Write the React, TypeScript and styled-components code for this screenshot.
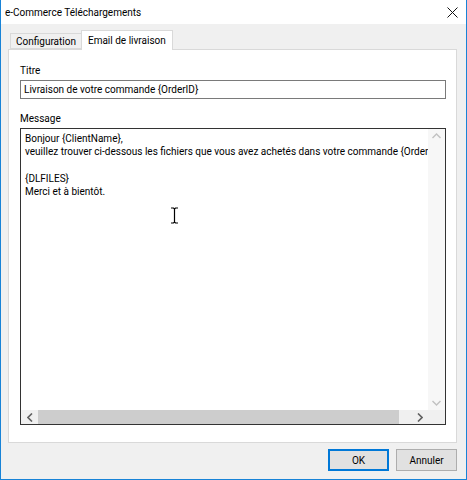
import React from 'react'
import styled, { createGlobalStyle } from 'styled-components'

const GlobalStyle = createGlobalStyle`
    html, body {
        margin: 0;
        padding: 0;
        background: #ffffff;
    }
    body {
        font-family: Roboto, 'Noto Sans', sans-serif;
        font-size: 10px;
        color: #000;
    }
`

const messageLines = [
    'Bonjour {ClientName},',
    'veuillez trouver ci-dessous les fichiers que vous avez achetés dans votre commande {OrderID}.',
    '',
    '{DLFILES}',
    'Merci et à bientôt.',
]

export default function App() {
    return (
        <>
            <GlobalStyle />
            <Window>
                <TitleBar>
                    <Title>e-Commerce Téléchargements</Title>
                    <CloseButton>
                        <svg width="11" height="11" viewBox="0 0 11 11">
                            <path d="M0.5 0.5 L10.5 10.5 M10.5 0.5 L0.5 10.5" stroke="#111" strokeWidth="1" />
                        </svg>
                    </CloseButton>
                </TitleBar>
                <Client>
                    <TabStrip>
                        <Tab>Configuration</Tab>
                        <Tab active>Email de livraison</Tab>
                    </TabStrip>
                    <TabPage>
                        <FieldLabel>Titre</FieldLabel>
                        <TextInput>Livraison de votre commande {'{OrderID}'}</TextInput>
                        <FieldLabel>Message</FieldLabel>
                        <MemoBox>
                            <MemoText>
                                {messageLines.map((line, i) => (
                                    <Line key={i}>{line || '\u00a0'}</Line>
                                ))}
                            </MemoText>
                            <VScroll>
                                <Arrow>
                                    <svg width="9" height="6" viewBox="0 0 9 6">
                                        <path d="M0.5 5 L4.5 1 L8.5 5" stroke="#c2c2c2" strokeWidth="1.4" fill="none" />
                                    </svg>
                                </Arrow>
                                <Arrow>
                                    <svg width="9" height="6" viewBox="0 0 9 6">
                                        <path d="M0.5 1 L4.5 5 L8.5 1" stroke="#c2c2c2" strokeWidth="1.4" fill="none" />
                                    </svg>
                                </Arrow>
                            </VScroll>
                            <HScroll>
                                <Arrow>
                                    <svg width="6" height="9" viewBox="0 0 6 9">
                                        <path d="M5 0.5 L1 4.5 L5 8.5" stroke="#606060" strokeWidth="1.6" fill="none" />
                                    </svg>
                                </Arrow>
                                <Thumb />
                                <Arrow>
                                    <svg width="6" height="9" viewBox="0 0 6 9">
                                        <path d="M1 0.5 L5 4.5 L1 8.5" stroke="#606060" strokeWidth="1.6" fill="none" />
                                    </svg>
                                </Arrow>
                            </HScroll>
                            <Corner />
                            <Cursor>
                                <svg width="9" height="17" viewBox="0 0 9 17">
                                    <path d="M1 1 H3.5 L4.5 2 L5.5 1 H8 M4.5 2 V15 M1 16 H3.5 L4.5 15 L5.5 16 H8" stroke="#000" strokeWidth="1.2" fill="none" />
                                </svg>
                            </Cursor>
                        </MemoBox>
                    </TabPage>
                    <ButtonRow>
                        <Button primary>OK</Button>
                        <Button>Annuler</Button>
                    </ButtonRow>
                </Client>
            </Window>
        </>
    )
}

const Window = styled.div`
    width: 467px;
    height: 480px;
    box-sizing: border-box;
    border: 1px solid #1883d7;
    border-top: none;
    display: flex;
    flex-direction: column;
    background: #f0f0f0;
`

const TitleBar = styled.div`
    height: 23px;
    background: #ffffff;
    display: flex;
    align-items: center;
    justify-content: space-between;
    padding: 1px 4px 0 4px;
    flex-shrink: 0;
`

const Title = styled.span`
    font-size: 10px;
    color: #000;
`

const CloseButton = styled.div`
    width: 20px;
    height: 23px;
    display: flex;
    align-items: center;
    justify-content: center;
`

const Client = styled.div`
    flex: 1;
    display: flex;
    flex-direction: column;
    padding: 7px 9px 8px 7px;
`

const TabStrip = styled.div`
    display: flex;
    align-items: flex-end;
    padding-left: 2px;
    height: 18px;
    position: relative;
    z-index: 1;
`

const Tab = styled.div<{ active?: boolean }>`
    box-sizing: border-box;
    height: ${p => (p.active ? '20px' : '16px')};
    margin-bottom: ${p => (p.active ? '-1px' : '0')};
    margin-left: ${p => (p.active ? '-1px' : '0')};
    padding: 0 ${p => (p.active ? '6px' : '5px')};
    display: flex;
    align-items: center;
    background: ${p => (p.active ? '#ffffff' : '#f0f0f0')};
    border: 1px solid #d9d9d9;
    border-bottom: ${p => (p.active ? 'none' : '1px solid #d9d9d9')};
    white-space: nowrap;
`

const TabPage = styled.div`
    flex: 1;
    background: #ffffff;
    border: 1px solid #d9d9d9;
    display: flex;
    flex-direction: column;
    padding: 13px 10px 17px 11px;
`

const FieldLabel = styled.div`
    height: 15px;
    line-height: 15px;
    margin-bottom: 2px;
`

const TextInput = styled.div`
    box-sizing: border-box;
    height: 19px;
    border: 1px solid #7a7a7a;
    padding: 0 3px;
    line-height: 17px;
    margin-bottom: 12px;
    white-space: nowrap;
`

const MemoBox = styled.div`
    flex: 1;
    box-sizing: border-box;
    border: 1px solid #333333;
    display: grid;
    grid-template-columns: 1fr 17px;
    grid-template-rows: 1fr 14px;
    position: relative;
    min-height: 0;
`

const MemoText = styled.div`
    overflow: hidden;
    padding: 3px 0 0 4px;
    line-height: 13.3px;
    white-space: pre;
`

const Line = styled.div``

const VScroll = styled.div`
    background: #f7f7f7;
    display: flex;
    flex-direction: column;
    justify-content: space-between;
`

const HScroll = styled.div`
    background: #f0f0f0;
    display: flex;
    align-items: stretch;
`

const Arrow = styled.div`
    width: 17px;
    height: 14px;
    display: flex;
    align-items: center;
    justify-content: center;
    flex-shrink: 0;
`

const Thumb = styled.div`
    flex: 1;
    margin: 0 12px 0 0;
    background: #cdcdcd;
`

const Corner = styled.div`
    background: #f0f0f0;
`

const Cursor = styled.div`
    position: absolute;
    left: 149px;
    top: 78px;
    line-height: 0;
`

const ButtonRow = styled.div`
    display: flex;
    justify-content: flex-end;
    gap: 7px;
    padding-top: 6px;
`

const Button = styled.div<{ primary?: boolean }>`
    box-sizing: border-box;
    width: 61px;
    height: 22px;
    display: flex;
    align-items: center;
    justify-content: center;
    background: #e1e1e1;
    border: 1px solid ${p => (p.primary ? '#0078d7' : '#adadad')};
    box-shadow: ${p => (p.primary ? 'inset 0 0 0 1px #0078d7' : 'none')};
`
